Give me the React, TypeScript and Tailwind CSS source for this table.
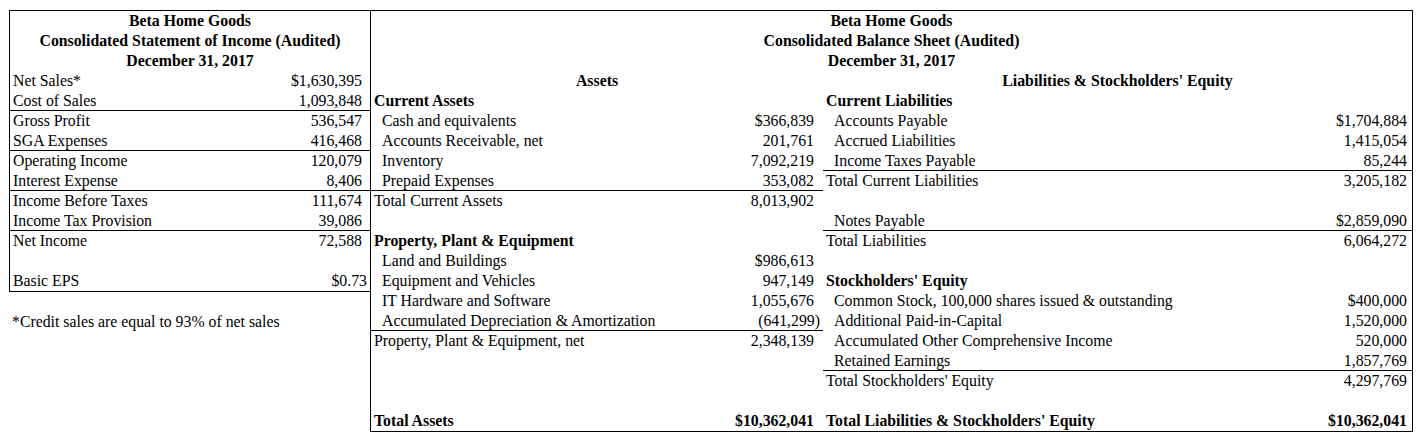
type Row = {
  label?: string;
  value?: string;
  bold?: boolean;
  indent?: boolean;
  center?: boolean;
  line?: boolean;
  tight?: boolean;
};

const incomeRows: Row[] = [
  { label: "Net Sales*", value: "$1,630,395" },
  { label: "Cost of Sales", value: "1,093,848", line: true },
  { label: "Gross Profit", value: "536,547" },
  { label: "SGA Expenses", value: "416,468", line: true },
  { label: "Operating Income", value: "120,079" },
  { label: "Interest Expense", value: "8,406", line: true },
  { label: "Income Before Taxes", value: "111,674" },
  { label: "Income Tax Provision", value: "39,086", line: true },
  { label: "Net Income", value: "72,588" },
  {},
  { label: "Basic EPS", value: "$0.73", tight: true },
];

const assetRows: Row[] = [
  { label: "Assets", bold: true, center: true },
  { label: "Current Assets", bold: true },
  { label: "Cash and equivalents", value: "$366,839", indent: true },
  { label: "Accounts Receivable, net", value: "201,761", indent: true },
  { label: "Inventory", value: "7,092,219", indent: true },
  { label: "Prepaid Expenses", value: "353,082", indent: true, line: true },
  { label: "Total Current Assets", value: "8,013,902" },
  {},
  { label: "Property, Plant & Equipment", bold: true },
  { label: "Land and Buildings", value: "$986,613", indent: true },
  { label: "Equipment and Vehicles", value: "947,149", indent: true },
  { label: "IT Hardware and Software", value: "1,055,676", indent: true },
  { label: "Accumulated Depreciation & Amortization", value: "(641,299)", indent: true, line: true, tight: true },
  { label: "Property, Plant & Equipment, net", value: "2,348,139" },
  {},
  {},
  {},
  { label: "Total Assets", value: "$10,362,041", bold: true },
];

const liabRows: Row[] = [
  { label: "Liabilities & Stockholders' Equity", bold: true, center: true },
  { label: "Current Liabilities", bold: true },
  { label: "Accounts Payable", value: "$1,704,884", indent: true },
  { label: "Accrued Liabilities", value: "1,415,054", indent: true },
  { label: "Income Taxes Payable", value: "85,244", indent: true, line: true },
  { label: "Total Current Liabilities", value: "3,205,182" },
  {},
  { label: "Notes Payable", value: "$2,859,090", indent: true, line: true },
  { label: "Total Liabilities", value: "6,064,272" },
  {},
  { label: "Stockholders' Equity", bold: true },
  { label: "Common Stock, 100,000 shares issued & outstanding", value: "$400,000", indent: true },
  { label: "Additional Paid-in-Capital", value: "1,520,000", indent: true },
  { label: "Accumulated Other Comprehensive Income", value: "520,000", indent: true },
  { label: "Retained Earnings", value: "1,857,769", indent: true, line: true },
  { label: "Total Stockholders' Equity", value: "4,297,769" },
  {},
  { label: "Total Liabilities & Stockholders' Equity", value: "$10,362,041", bold: true },
];

function Title({ lines }: { lines: string[] }) {
  return (
    <>
      {lines.map((t) => (
        <div key={t} className="h-[20px] text-center font-bold">
          {t}
        </div>
      ))}
    </>
  );
}

function Line({ row, padRight, padRightTight }: { row: Row; padRight: string; padRightTight: string }) {
  return (
    <div
      className={`flex h-[20px] items-center justify-between whitespace-nowrap ${
        row.line ? "border-b border-black" : ""
      } ${row.bold ? "font-bold" : ""}`}
    >
      {row.center ? (
        <span className="w-full text-center">{row.label}</span>
      ) : (
        <>
          <span className={row.indent ? "pl-[11px]" : "pl-[3px]"}>{row.label}</span>
          <span className={row.tight ? padRightTight : padRight}>{row.value}</span>
        </>
      )}
    </div>
  );
}

export default function App() {
  return (
    <div className="flex bg-white pl-[9px] pt-[10px] font-['Liberation_Serif','Times_New_Roman',serif] text-[15.8px] leading-[20px] text-black">
      {/* income statement */}
      <div className="w-[361px] shrink-0">
        <div className="border-b border-l border-t border-black">
          <Title
            lines={["Beta Home Goods", "Consolidated Statement of Income (Audited)", "December 31, 2017"]}
          />
          {incomeRows.map((r, i) => (
            <Line key={i} row={{ ...r, indent: false }} padRight="pr-[8px]" padRightTight="pr-[3px]" />
          ))}
        </div>
        <div className="h-[20px]" />
        <div className="h-[20px] pl-[3px] whitespace-nowrap">*Credit sales are equal to 93% of net sales</div>
      </div>

      {/* balance sheet */}
      <div className="w-[1043px] shrink-0 border border-black">
        <Title lines={["Beta Home Goods", "Consolidated Balance Sheet (Audited)", "December 31, 2017"]} />
        <div className="grid grid-cols-[452px_589px]">
          <div>
            {assetRows.map((r, i) => (
              <Line key={i} row={r} padRight="pr-[9px]" padRightTight="pr-[3px]" />
            ))}
          </div>
          <div>
            {liabRows.map((r, i) => (
              <Line key={i} row={r} padRight="pr-[5px]" padRightTight="pr-[5px]" />
            ))}
          </div>
        </div>
      </div>
    </div>
  );
}
